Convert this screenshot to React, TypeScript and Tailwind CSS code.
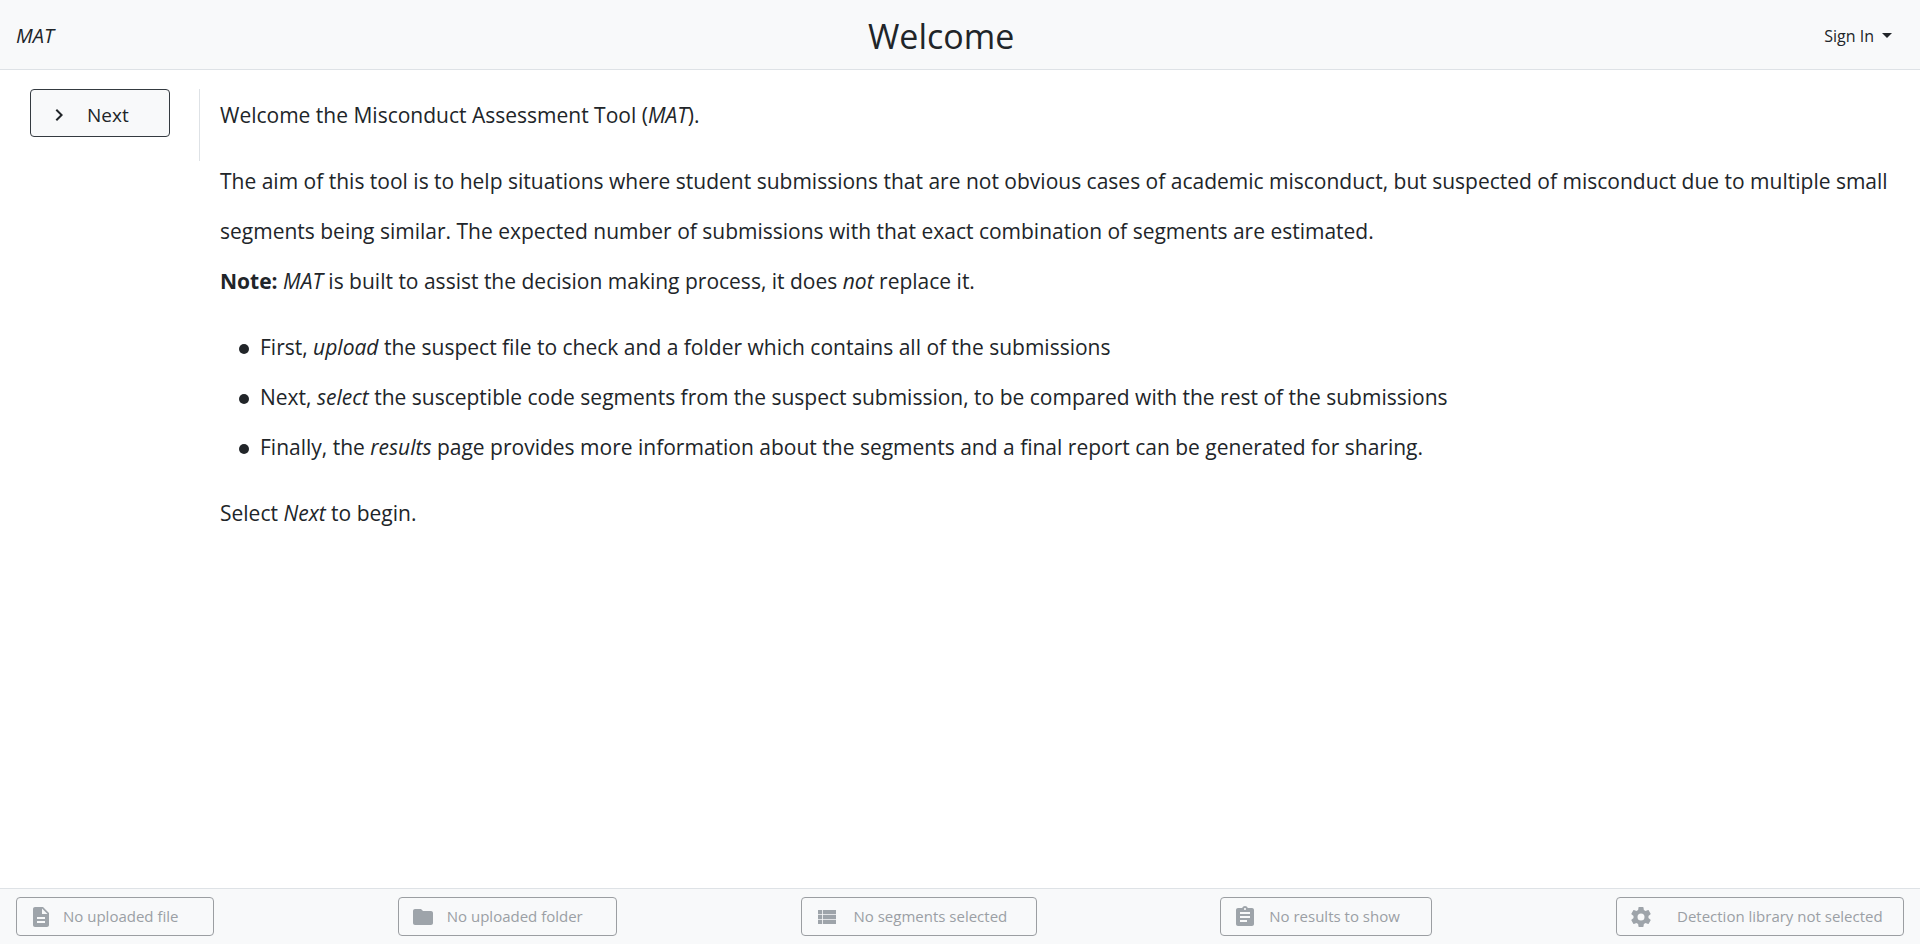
import type { ComponentType } from "react";
import { MdAssignment, MdChevronRight, MdDescription, MdFolder } from "react-icons/md";

type IconProps = { className?: string };

function ListIcon({ className }: IconProps) {
  return (
    <svg viewBox="0 0 24 24" fill="currentColor" className={className} aria-hidden="true">
      <path d="M9 5v4.2h13V5M9 19h13v-4.2H9M9 14.1h13V9.9H9M4 9.2h4.2V5H4M4 19h4.2v-4.2H4M4 14.1h4.2V9.9H4z" />
    </svg>
  );
}

function CogIcon({ className }: IconProps) {
  return (
    <svg viewBox="0 0 24 24" fill="currentColor" className={className} aria-hidden="true">
      <path d="M12 15.5A3.5 3.5 0 0 1 8.5 12 3.5 3.5 0 0 1 12 8.5a3.5 3.5 0 0 1 3.5 3.5 3.5 3.5 0 0 1-3.5 3.5m7.43-2.53c.04-.32.07-.64.07-.97s-.03-.66-.07-1l2.11-1.63c.19-.15.24-.42.12-.64l-2-3.46c-.12-.22-.39-.31-.61-.22l-2.49 1c-.52-.39-1.06-.73-1.69-.98l-.37-2.65A.506.506 0 0 0 14 2h-4c-.25 0-.46.18-.5.42l-.37 2.65c-.63.25-1.17.59-1.69.98l-2.49-1c-.22-.09-.49 0-.61.22l-2 3.46c-.13.22-.07.49.12.64L4.57 11c-.04.34-.07.67-.07 1s.03.65.07.97l-2.11 1.66c-.19.15-.25.42-.12.64l2 3.46c.12.22.39.3.61.22l2.49-1.01c.52.4 1.06.74 1.69.99l.37 2.65c.04.24.25.42.5.42h4c.25 0 .46-.18.5-.42l.37-2.65c.63-.26 1.17-.59 1.69-.99l2.49 1.01c.22.08.49 0 .61-.22l2-3.46c.12-.22.07-.49-.12-.64z" />
    </svg>
  );
}

interface Status {
  label: string;
  icon: ComponentType<IconProps>;
  width: string;
  gap: string;
}

const statuses: Status[] = [
  { label: "No uploaded file", icon: MdDescription, width: "w-[198px]", gap: "gap-2.5" },
  { label: "No uploaded folder", icon: MdFolder, width: "w-[219px]", gap: "gap-3" },
  { label: "No segments selected", icon: ListIcon, width: "w-[236px]", gap: "gap-4" },
  { label: "No results to show", icon: MdAssignment, width: "w-[212px]", gap: "gap-3" },
  { label: "Detection library not selected", icon: CogIcon, width: "w-[288px]", gap: "gap-6" },
];

const bullet =
  "before:mr-[11px] before:-ml-[21px] before:inline-block before:size-2.5 before:rounded-full before:bg-[#212529] before:align-middle before:content-['']";

function Header() {
  return (
    <header className="flex h-[70px] items-center justify-between border-b border-[#dee2e6] bg-[#f8f9fa] px-4 pt-0.5">
      <a href="#home" className="mr-4 text-[20px] italic">
        MAT
      </a>
      <h1 className="text-[34px] leading-10">Welcome</h1>
      <button type="button" className="flex items-center gap-2 px-3 text-[16px]">
        Sign In
        <span className="border-x-[5px] border-t-[5px] border-x-transparent border-t-[#212529]" />
      </button>
    </header>
  );
}

function Footer() {
  return (
    <footer className="flex justify-between border-t border-[#dee2e6] bg-[#f8f9fa] px-4 py-2">
      {statuses.map(({ label, icon: Icon, width, gap }) => (
        <button
          key={label}
          type="button"
          disabled
          className={`flex h-[39px] items-center rounded border border-[#9b9ea2] px-3 text-[15px] whitespace-nowrap text-[#9b9fa5] ${width} ${gap}`}
        >
          <Icon className="size-6 shrink-0 text-[#9ea4aa]" />
          {label}
        </button>
      ))}
    </footer>
  );
}

export default function App() {
  return (
    <div className="flex min-h-screen flex-col bg-white font-['Open_Sans','Noto_Sans',sans-serif] text-[#212529]">
      <Header />
      <main className="flex grow items-start pt-[19px]">
        <nav className="h-[72px] w-[200px] shrink-0 border-r border-[#dee2e6] pl-[30px]">
          <button
            type="button"
            className="flex h-12 w-[140px] items-center gap-4 rounded border border-[#343a40] bg-[#f8f9fa] pt-1 pl-4 text-[19px]"
          >
            <MdChevronRight className="size-6" />
            Next
          </button>
        </nav>
        <article className="grow px-5 pt-px text-[21px] leading-[50px]">
          <p className="mb-4">
            Welcome the Misconduct Assessment Tool (<em>MAT</em>).
          </p>
          <p>
            The aim of this tool is to help situations where student submissions that are not obvious cases of academic
            misconduct, but suspected of misconduct due to multiple small segments being similar. The expected number of
            submissions with that exact combination of segments are estimated.
          </p>
          <p className="mb-4">
            <strong>Note:</strong> <em>MAT</em> is built to assist the decision making process, it does <em>not</em>{" "}
            replace it.
          </p>
          <ul className="mb-4 pl-10">
            <li className={bullet}>
              First, <em>upload</em> the suspect file to check and a folder which contains all of the submissions
            </li>
            <li className={bullet}>
              Next, <em>select</em> the susceptible code segments from the suspect submission, to be compared with the
              rest of the submissions
            </li>
            <li className={bullet}>
              Finally, the <em>results</em> page provides more information about the segments and a final report can be
              generated for sharing.
            </li>
          </ul>
          <p>
            Select <em>Next</em> to begin.
          </p>
        </article>
      </main>
      <Footer />
    </div>
  );
}
